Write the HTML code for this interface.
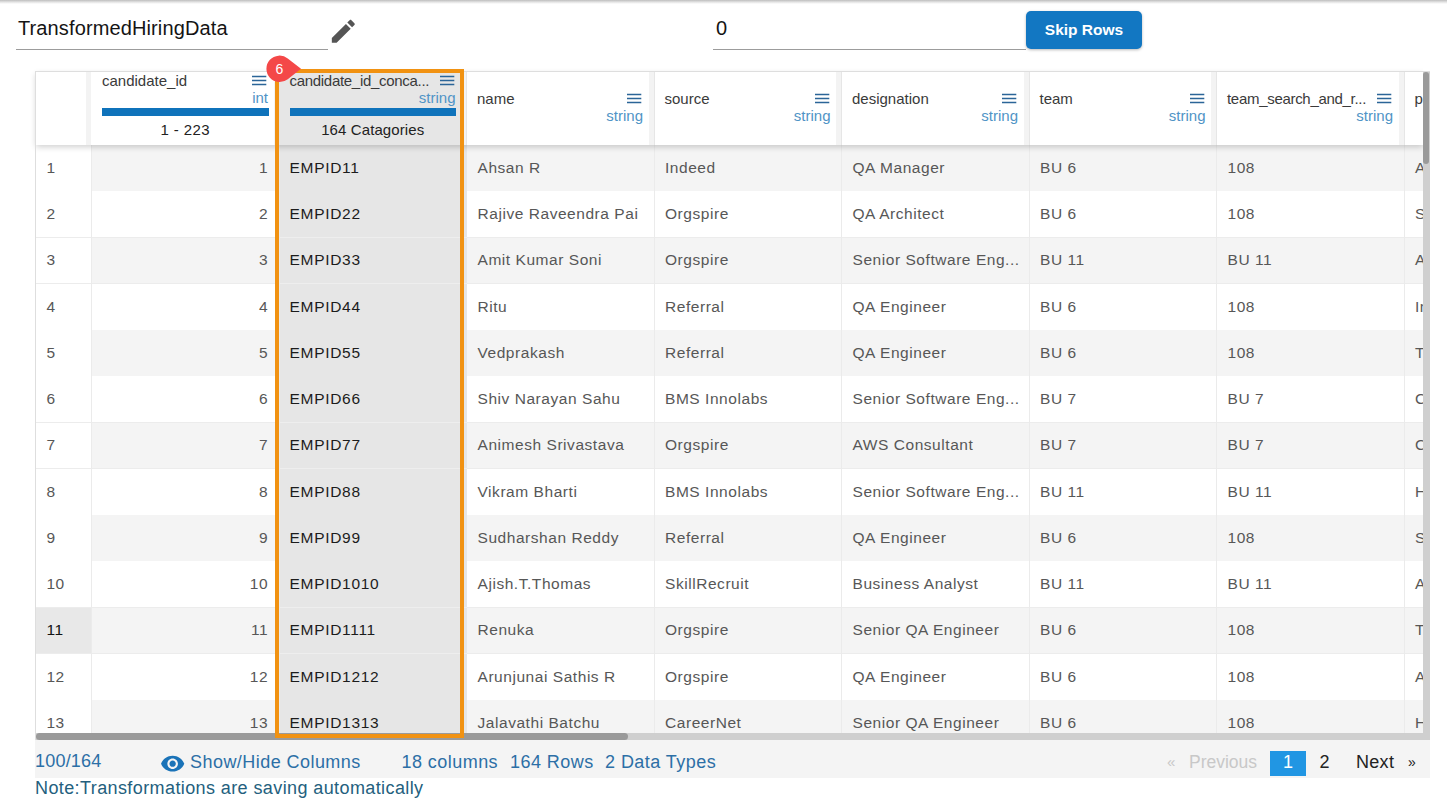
<!DOCTYPE html><html><head><meta charset="utf-8"><style>
*{margin:0;padding:0;box-sizing:border-box}
html,body{width:1447px;height:808px;overflow:hidden;background:#fff;font-family:"Liberation Sans",sans-serif}
.a{position:absolute}
.t{position:absolute;white-space:nowrap;line-height:1.149}
.ham{position:absolute;width:15px;height:10px}
.ham i{position:absolute;left:0;width:15px;height:1.3px;background:#2a6fa9}
</style></head><body><div class="a" style="left:0;top:0;width:1447px;height:4px;background:linear-gradient(#bdbdbd,#e2e2e2 50%,#fff)"></div>
<div class="t" style="left:18px;top:17.10px;font-size:20px;color:#141414;letter-spacing:0.12px;">TransformedHiringData</div>
<div class="a" style="left:16px;top:49px;width:312px;height:1px;background:#9c9c9c"></div>
<svg class="a" style="left:328px;top:15.8px" width="30.6" height="30.6" viewBox="0 0 24 24"><path fill="#555" d="M3 17.25V21h3.75L17.81 9.94l-3.75-3.75L3 17.25zM20.71 7.04c.39-.39.39-1.02 0-1.41l-2.34-2.34c-.39-.39-1.02-.39-1.41 0l-1.83 1.83 3.75 3.75 1.83-1.83z"/></svg>
<div class="t" style="left:716px;top:16.90px;font-size:20px;color:#141414;">0</div>
<div class="a" style="left:713px;top:49px;width:313px;height:1px;background:#9c9c9c"></div>
<div class="a" style="left:1026px;top:11px;width:116px;height:38px;border-radius:5px;background:#1277c2;box-shadow:0 1px 3px rgba(0,0,0,.28)"></div>
<div class="t" style="left:1026px;top:20.97px;font-size:15.5px;color:#fff;width:116px;text-align:center;font-weight:bold;">Skip Rows</div>
<div class="a" style="left:0;top:0;width:1423px;height:733px;overflow:hidden"><div class="a" style="left:92.0px;top:145.0px;width:1400px;height:46.25px;background:#f4f4f4"></div><div class="a" style="left:36px;top:145.0px;width:55px;height:46.25px;background:#fff"></div><div class="a" style="left:36px;top:190.75px;width:1400px;height:1px;background:#ececec"></div><div class="t" style="left:46.5px;top:158.77px;font-size:15.5px;color:#575757;letter-spacing:0.45px;">1</div><div class="t" style="left:92.5px;top:158.77px;font-size:15.5px;color:#575757;width:175.5px;text-align:right;letter-spacing:0.45px;">1</div><div class="a" style="left:279.5px;top:145.0px;width:187.5px;height:46.25px;background:#e6e6e6"></div><div class="a" style="left:279.5px;top:190.75px;width:187.5px;height:1px;background:#eeeeee"></div><div class="t" style="left:289.5px;top:158.77px;font-size:15.5px;color:#1c1c1c;letter-spacing:0.7px;">EMPID11</div><div class="t" style="left:477.5px;top:158.77px;font-size:15.5px;color:#575757;letter-spacing:0.55px;">Ahsan R</div><div class="t" style="left:665.0px;top:158.77px;font-size:15.5px;color:#575757;letter-spacing:0.55px;">Indeed</div><div class="t" style="left:852.5px;top:158.77px;font-size:15.5px;color:#575757;letter-spacing:0.55px;">QA Manager</div><div class="t" style="left:1040.0px;top:158.77px;font-size:15.5px;color:#575757;letter-spacing:0.55px;">BU 6</div><div class="t" style="left:1227.5px;top:158.77px;font-size:15.5px;color:#575757;letter-spacing:0.55px;">108</div><div class="t" style="left:1415.0px;top:158.77px;font-size:15.5px;color:#575757;letter-spacing:0.55px;">Ahm</div><div class="a" style="left:92.0px;top:191.25px;width:1400px;height:46.25px;background:#fff"></div><div class="a" style="left:36px;top:191.25px;width:55px;height:46.25px;background:#fff"></div><div class="a" style="left:36px;top:237.0px;width:1400px;height:1px;background:#ececec"></div><div class="t" style="left:46.5px;top:205.02px;font-size:15.5px;color:#575757;letter-spacing:0.45px;">2</div><div class="t" style="left:92.5px;top:205.02px;font-size:15.5px;color:#575757;width:175.5px;text-align:right;letter-spacing:0.45px;">2</div><div class="a" style="left:279.5px;top:191.25px;width:187.5px;height:46.25px;background:#e6e6e6"></div><div class="a" style="left:279.5px;top:237.0px;width:187.5px;height:1px;background:#eeeeee"></div><div class="t" style="left:289.5px;top:205.02px;font-size:15.5px;color:#1c1c1c;letter-spacing:0.7px;">EMPID22</div><div class="t" style="left:477.5px;top:205.02px;font-size:15.5px;color:#575757;letter-spacing:0.55px;">Rajive Raveendra Pai</div><div class="t" style="left:665.0px;top:205.02px;font-size:15.5px;color:#575757;letter-spacing:0.55px;">Orgspire</div><div class="t" style="left:852.5px;top:205.02px;font-size:15.5px;color:#575757;letter-spacing:0.55px;">QA Architect</div><div class="t" style="left:1040.0px;top:205.02px;font-size:15.5px;color:#575757;letter-spacing:0.55px;">BU 6</div><div class="t" style="left:1227.5px;top:205.02px;font-size:15.5px;color:#575757;letter-spacing:0.55px;">108</div><div class="t" style="left:1415.0px;top:205.02px;font-size:15.5px;color:#575757;letter-spacing:0.55px;">Sur</div><div class="a" style="left:92.0px;top:237.5px;width:1400px;height:46.25px;background:#f4f4f4"></div><div class="a" style="left:36px;top:237.5px;width:55px;height:46.25px;background:#fff"></div><div class="a" style="left:36px;top:283.25px;width:1400px;height:1px;background:#ececec"></div><div class="t" style="left:46.5px;top:251.27px;font-size:15.5px;color:#575757;letter-spacing:0.45px;">3</div><div class="t" style="left:92.5px;top:251.27px;font-size:15.5px;color:#575757;width:175.5px;text-align:right;letter-spacing:0.45px;">3</div><div class="a" style="left:279.5px;top:237.5px;width:187.5px;height:46.25px;background:#e6e6e6"></div><div class="a" style="left:279.5px;top:283.25px;width:187.5px;height:1px;background:#eeeeee"></div><div class="t" style="left:289.5px;top:251.27px;font-size:15.5px;color:#1c1c1c;letter-spacing:0.7px;">EMPID33</div><div class="t" style="left:477.5px;top:251.27px;font-size:15.5px;color:#575757;letter-spacing:0.55px;">Amit Kumar Soni</div><div class="t" style="left:665.0px;top:251.27px;font-size:15.5px;color:#575757;letter-spacing:0.55px;">Orgspire</div><div class="t" style="left:852.5px;top:251.27px;font-size:15.5px;color:#575757;letter-spacing:0.55px;">Senior Software Eng...</div><div class="t" style="left:1040.0px;top:251.27px;font-size:15.5px;color:#575757;letter-spacing:0.55px;">BU 11</div><div class="t" style="left:1227.5px;top:251.27px;font-size:15.5px;color:#575757;letter-spacing:0.55px;">BU 11</div><div class="t" style="left:1415.0px;top:251.27px;font-size:15.5px;color:#575757;letter-spacing:0.55px;">Ahm</div><div class="a" style="left:92.0px;top:283.75px;width:1400px;height:46.25px;background:#fff"></div><div class="a" style="left:36px;top:283.75px;width:55px;height:46.25px;background:#fff"></div><div class="a" style="left:36px;top:329.5px;width:1400px;height:1px;background:#ececec"></div><div class="t" style="left:46.5px;top:297.52px;font-size:15.5px;color:#575757;letter-spacing:0.45px;">4</div><div class="t" style="left:92.5px;top:297.52px;font-size:15.5px;color:#575757;width:175.5px;text-align:right;letter-spacing:0.45px;">4</div><div class="a" style="left:279.5px;top:283.75px;width:187.5px;height:46.25px;background:#e6e6e6"></div><div class="a" style="left:279.5px;top:329.5px;width:187.5px;height:1px;background:#eeeeee"></div><div class="t" style="left:289.5px;top:297.52px;font-size:15.5px;color:#1c1c1c;letter-spacing:0.7px;">EMPID44</div><div class="t" style="left:477.5px;top:297.52px;font-size:15.5px;color:#575757;letter-spacing:0.55px;">Ritu</div><div class="t" style="left:665.0px;top:297.52px;font-size:15.5px;color:#575757;letter-spacing:0.55px;">Referral</div><div class="t" style="left:852.5px;top:297.52px;font-size:15.5px;color:#575757;letter-spacing:0.55px;">QA Engineer</div><div class="t" style="left:1040.0px;top:297.52px;font-size:15.5px;color:#575757;letter-spacing:0.55px;">BU 6</div><div class="t" style="left:1227.5px;top:297.52px;font-size:15.5px;color:#575757;letter-spacing:0.55px;">108</div><div class="t" style="left:1415.0px;top:297.52px;font-size:15.5px;color:#575757;letter-spacing:0.55px;">Ind</div><div class="a" style="left:92.0px;top:330.0px;width:1400px;height:46.25px;background:#f4f4f4"></div><div class="a" style="left:36px;top:330.0px;width:55px;height:46.25px;background:#fff"></div><div class="a" style="left:36px;top:375.75px;width:1400px;height:1px;background:#ececec"></div><div class="t" style="left:46.5px;top:343.77px;font-size:15.5px;color:#575757;letter-spacing:0.45px;">5</div><div class="t" style="left:92.5px;top:343.77px;font-size:15.5px;color:#575757;width:175.5px;text-align:right;letter-spacing:0.45px;">5</div><div class="a" style="left:279.5px;top:330.0px;width:187.5px;height:46.25px;background:#e6e6e6"></div><div class="a" style="left:279.5px;top:375.75px;width:187.5px;height:1px;background:#eeeeee"></div><div class="t" style="left:289.5px;top:343.77px;font-size:15.5px;color:#1c1c1c;letter-spacing:0.7px;">EMPID55</div><div class="t" style="left:477.5px;top:343.77px;font-size:15.5px;color:#575757;letter-spacing:0.55px;">Vedprakash</div><div class="t" style="left:665.0px;top:343.77px;font-size:15.5px;color:#575757;letter-spacing:0.55px;">Referral</div><div class="t" style="left:852.5px;top:343.77px;font-size:15.5px;color:#575757;letter-spacing:0.55px;">QA Engineer</div><div class="t" style="left:1040.0px;top:343.77px;font-size:15.5px;color:#575757;letter-spacing:0.55px;">BU 6</div><div class="t" style="left:1227.5px;top:343.77px;font-size:15.5px;color:#575757;letter-spacing:0.55px;">108</div><div class="t" style="left:1415.0px;top:343.77px;font-size:15.5px;color:#575757;letter-spacing:0.55px;">Tha</div><div class="a" style="left:92.0px;top:376.25px;width:1400px;height:46.25px;background:#fff"></div><div class="a" style="left:36px;top:376.25px;width:55px;height:46.25px;background:#fff"></div><div class="a" style="left:36px;top:422.0px;width:1400px;height:1px;background:#ececec"></div><div class="t" style="left:46.5px;top:390.02px;font-size:15.5px;color:#575757;letter-spacing:0.45px;">6</div><div class="t" style="left:92.5px;top:390.02px;font-size:15.5px;color:#575757;width:175.5px;text-align:right;letter-spacing:0.45px;">6</div><div class="a" style="left:279.5px;top:376.25px;width:187.5px;height:46.25px;background:#e6e6e6"></div><div class="a" style="left:279.5px;top:422.0px;width:187.5px;height:1px;background:#eeeeee"></div><div class="t" style="left:289.5px;top:390.02px;font-size:15.5px;color:#1c1c1c;letter-spacing:0.7px;">EMPID66</div><div class="t" style="left:477.5px;top:390.02px;font-size:15.5px;color:#575757;letter-spacing:0.55px;">Shiv Narayan Sahu</div><div class="t" style="left:665.0px;top:390.02px;font-size:15.5px;color:#575757;letter-spacing:0.55px;">BMS Innolabs</div><div class="t" style="left:852.5px;top:390.02px;font-size:15.5px;color:#575757;letter-spacing:0.55px;">Senior Software Eng...</div><div class="t" style="left:1040.0px;top:390.02px;font-size:15.5px;color:#575757;letter-spacing:0.55px;">BU 7</div><div class="t" style="left:1227.5px;top:390.02px;font-size:15.5px;color:#575757;letter-spacing:0.55px;">BU 7</div><div class="t" style="left:1415.0px;top:390.02px;font-size:15.5px;color:#575757;letter-spacing:0.55px;">Che</div><div class="a" style="left:92.0px;top:422.5px;width:1400px;height:46.25px;background:#f4f4f4"></div><div class="a" style="left:36px;top:422.5px;width:55px;height:46.25px;background:#fff"></div><div class="a" style="left:36px;top:468.25px;width:1400px;height:1px;background:#ececec"></div><div class="t" style="left:46.5px;top:436.27px;font-size:15.5px;color:#575757;letter-spacing:0.45px;">7</div><div class="t" style="left:92.5px;top:436.27px;font-size:15.5px;color:#575757;width:175.5px;text-align:right;letter-spacing:0.45px;">7</div><div class="a" style="left:279.5px;top:422.5px;width:187.5px;height:46.25px;background:#e6e6e6"></div><div class="a" style="left:279.5px;top:468.25px;width:187.5px;height:1px;background:#eeeeee"></div><div class="t" style="left:289.5px;top:436.27px;font-size:15.5px;color:#1c1c1c;letter-spacing:0.7px;">EMPID77</div><div class="t" style="left:477.5px;top:436.27px;font-size:15.5px;color:#575757;letter-spacing:0.55px;">Animesh Srivastava</div><div class="t" style="left:665.0px;top:436.27px;font-size:15.5px;color:#575757;letter-spacing:0.55px;">Orgspire</div><div class="t" style="left:852.5px;top:436.27px;font-size:15.5px;color:#575757;letter-spacing:0.55px;">AWS Consultant</div><div class="t" style="left:1040.0px;top:436.27px;font-size:15.5px;color:#575757;letter-spacing:0.55px;">BU 7</div><div class="t" style="left:1227.5px;top:436.27px;font-size:15.5px;color:#575757;letter-spacing:0.55px;">BU 7</div><div class="t" style="left:1415.0px;top:436.27px;font-size:15.5px;color:#575757;letter-spacing:0.55px;">Che</div><div class="a" style="left:92.0px;top:468.75px;width:1400px;height:46.25px;background:#fff"></div><div class="a" style="left:36px;top:468.75px;width:55px;height:46.25px;background:#fff"></div><div class="a" style="left:36px;top:514.5px;width:1400px;height:1px;background:#ececec"></div><div class="t" style="left:46.5px;top:482.52px;font-size:15.5px;color:#575757;letter-spacing:0.45px;">8</div><div class="t" style="left:92.5px;top:482.52px;font-size:15.5px;color:#575757;width:175.5px;text-align:right;letter-spacing:0.45px;">8</div><div class="a" style="left:279.5px;top:468.75px;width:187.5px;height:46.25px;background:#e6e6e6"></div><div class="a" style="left:279.5px;top:514.5px;width:187.5px;height:1px;background:#eeeeee"></div><div class="t" style="left:289.5px;top:482.52px;font-size:15.5px;color:#1c1c1c;letter-spacing:0.7px;">EMPID88</div><div class="t" style="left:477.5px;top:482.52px;font-size:15.5px;color:#575757;letter-spacing:0.55px;">Vikram Bharti</div><div class="t" style="left:665.0px;top:482.52px;font-size:15.5px;color:#575757;letter-spacing:0.55px;">BMS Innolabs</div><div class="t" style="left:852.5px;top:482.52px;font-size:15.5px;color:#575757;letter-spacing:0.55px;">Senior Software Eng...</div><div class="t" style="left:1040.0px;top:482.52px;font-size:15.5px;color:#575757;letter-spacing:0.55px;">BU 11</div><div class="t" style="left:1227.5px;top:482.52px;font-size:15.5px;color:#575757;letter-spacing:0.55px;">BU 11</div><div class="t" style="left:1415.0px;top:482.52px;font-size:15.5px;color:#575757;letter-spacing:0.55px;">Hyd</div><div class="a" style="left:92.0px;top:515.0px;width:1400px;height:46.25px;background:#f4f4f4"></div><div class="a" style="left:36px;top:515.0px;width:55px;height:46.25px;background:#fff"></div><div class="a" style="left:36px;top:560.75px;width:1400px;height:1px;background:#ececec"></div><div class="t" style="left:46.5px;top:528.77px;font-size:15.5px;color:#575757;letter-spacing:0.45px;">9</div><div class="t" style="left:92.5px;top:528.77px;font-size:15.5px;color:#575757;width:175.5px;text-align:right;letter-spacing:0.45px;">9</div><div class="a" style="left:279.5px;top:515.0px;width:187.5px;height:46.25px;background:#e6e6e6"></div><div class="a" style="left:279.5px;top:560.75px;width:187.5px;height:1px;background:#eeeeee"></div><div class="t" style="left:289.5px;top:528.77px;font-size:15.5px;color:#1c1c1c;letter-spacing:0.7px;">EMPID99</div><div class="t" style="left:477.5px;top:528.77px;font-size:15.5px;color:#575757;letter-spacing:0.55px;">Sudharshan Reddy</div><div class="t" style="left:665.0px;top:528.77px;font-size:15.5px;color:#575757;letter-spacing:0.55px;">Referral</div><div class="t" style="left:852.5px;top:528.77px;font-size:15.5px;color:#575757;letter-spacing:0.55px;">QA Engineer</div><div class="t" style="left:1040.0px;top:528.77px;font-size:15.5px;color:#575757;letter-spacing:0.55px;">BU 6</div><div class="t" style="left:1227.5px;top:528.77px;font-size:15.5px;color:#575757;letter-spacing:0.55px;">108</div><div class="t" style="left:1415.0px;top:528.77px;font-size:15.5px;color:#575757;letter-spacing:0.55px;">Sur</div><div class="a" style="left:92.0px;top:561.25px;width:1400px;height:46.25px;background:#fff"></div><div class="a" style="left:36px;top:561.25px;width:55px;height:46.25px;background:#fff"></div><div class="a" style="left:36px;top:607.0px;width:1400px;height:1px;background:#ececec"></div><div class="t" style="left:46.5px;top:575.02px;font-size:15.5px;color:#575757;letter-spacing:0.45px;">10</div><div class="t" style="left:92.5px;top:575.02px;font-size:15.5px;color:#575757;width:175.5px;text-align:right;letter-spacing:0.45px;">10</div><div class="a" style="left:279.5px;top:561.25px;width:187.5px;height:46.25px;background:#e6e6e6"></div><div class="a" style="left:279.5px;top:607.0px;width:187.5px;height:1px;background:#eeeeee"></div><div class="t" style="left:289.5px;top:575.02px;font-size:15.5px;color:#1c1c1c;letter-spacing:0.7px;">EMPID1010</div><div class="t" style="left:477.5px;top:575.02px;font-size:15.5px;color:#575757;letter-spacing:0.55px;">Ajish.T.Thomas</div><div class="t" style="left:665.0px;top:575.02px;font-size:15.5px;color:#575757;letter-spacing:0.55px;">SkillRecruit</div><div class="t" style="left:852.5px;top:575.02px;font-size:15.5px;color:#575757;letter-spacing:0.55px;">Business Analyst</div><div class="t" style="left:1040.0px;top:575.02px;font-size:15.5px;color:#575757;letter-spacing:0.55px;">BU 11</div><div class="t" style="left:1227.5px;top:575.02px;font-size:15.5px;color:#575757;letter-spacing:0.55px;">BU 11</div><div class="t" style="left:1415.0px;top:575.02px;font-size:15.5px;color:#575757;letter-spacing:0.55px;">Ahm</div><div class="a" style="left:92.0px;top:607.5px;width:1400px;height:46.25px;background:#f4f4f4"></div><div class="a" style="left:36px;top:607.5px;width:55px;height:46.25px;background:#e8e8e8"></div><div class="a" style="left:36px;top:653.25px;width:1400px;height:1px;background:#ececec"></div><div class="t" style="left:46.5px;top:621.27px;font-size:15.5px;color:#111;letter-spacing:0.45px;">11</div><div class="t" style="left:92.5px;top:621.27px;font-size:15.5px;color:#575757;width:175.5px;text-align:right;letter-spacing:0.45px;">11</div><div class="a" style="left:279.5px;top:607.5px;width:187.5px;height:46.25px;background:#e6e6e6"></div><div class="a" style="left:279.5px;top:653.25px;width:187.5px;height:1px;background:#eeeeee"></div><div class="t" style="left:289.5px;top:621.27px;font-size:15.5px;color:#1c1c1c;letter-spacing:0.7px;">EMPID1111</div><div class="t" style="left:477.5px;top:621.27px;font-size:15.5px;color:#575757;letter-spacing:0.55px;">Renuka</div><div class="t" style="left:665.0px;top:621.27px;font-size:15.5px;color:#575757;letter-spacing:0.55px;">Orgspire</div><div class="t" style="left:852.5px;top:621.27px;font-size:15.5px;color:#575757;letter-spacing:0.55px;">Senior QA Engineer</div><div class="t" style="left:1040.0px;top:621.27px;font-size:15.5px;color:#575757;letter-spacing:0.55px;">BU 6</div><div class="t" style="left:1227.5px;top:621.27px;font-size:15.5px;color:#575757;letter-spacing:0.55px;">108</div><div class="t" style="left:1415.0px;top:621.27px;font-size:15.5px;color:#575757;letter-spacing:0.55px;">Tha</div><div class="a" style="left:92.0px;top:653.75px;width:1400px;height:46.25px;background:#fff"></div><div class="a" style="left:36px;top:653.75px;width:55px;height:46.25px;background:#fff"></div><div class="a" style="left:36px;top:699.5px;width:1400px;height:1px;background:#ececec"></div><div class="t" style="left:46.5px;top:667.52px;font-size:15.5px;color:#575757;letter-spacing:0.45px;">12</div><div class="t" style="left:92.5px;top:667.52px;font-size:15.5px;color:#575757;width:175.5px;text-align:right;letter-spacing:0.45px;">12</div><div class="a" style="left:279.5px;top:653.75px;width:187.5px;height:46.25px;background:#e6e6e6"></div><div class="a" style="left:279.5px;top:699.5px;width:187.5px;height:1px;background:#eeeeee"></div><div class="t" style="left:289.5px;top:667.52px;font-size:15.5px;color:#1c1c1c;letter-spacing:0.7px;">EMPID1212</div><div class="t" style="left:477.5px;top:667.52px;font-size:15.5px;color:#575757;letter-spacing:0.55px;">Arunjunai Sathis R</div><div class="t" style="left:665.0px;top:667.52px;font-size:15.5px;color:#575757;letter-spacing:0.55px;">Orgspire</div><div class="t" style="left:852.5px;top:667.52px;font-size:15.5px;color:#575757;letter-spacing:0.55px;">QA Engineer</div><div class="t" style="left:1040.0px;top:667.52px;font-size:15.5px;color:#575757;letter-spacing:0.55px;">BU 6</div><div class="t" style="left:1227.5px;top:667.52px;font-size:15.5px;color:#575757;letter-spacing:0.55px;">108</div><div class="t" style="left:1415.0px;top:667.52px;font-size:15.5px;color:#575757;letter-spacing:0.55px;">Ahm</div><div class="a" style="left:92.0px;top:700.0px;width:1400px;height:46.25px;background:#f4f4f4"></div><div class="a" style="left:36px;top:700.0px;width:55px;height:46.25px;background:#fff"></div><div class="a" style="left:36px;top:745.75px;width:1400px;height:1px;background:#ececec"></div><div class="t" style="left:46.5px;top:713.77px;font-size:15.5px;color:#575757;letter-spacing:0.45px;">13</div><div class="t" style="left:92.5px;top:713.77px;font-size:15.5px;color:#575757;width:175.5px;text-align:right;letter-spacing:0.45px;">13</div><div class="a" style="left:279.5px;top:700.0px;width:187.5px;height:46.25px;background:#e6e6e6"></div><div class="a" style="left:279.5px;top:745.75px;width:187.5px;height:1px;background:#eeeeee"></div><div class="t" style="left:289.5px;top:713.77px;font-size:15.5px;color:#1c1c1c;letter-spacing:0.7px;">EMPID1313</div><div class="t" style="left:477.5px;top:713.77px;font-size:15.5px;color:#575757;letter-spacing:0.55px;">Jalavathi Batchu</div><div class="t" style="left:665.0px;top:713.77px;font-size:15.5px;color:#575757;letter-spacing:0.55px;">CareerNet</div><div class="t" style="left:852.5px;top:713.77px;font-size:15.5px;color:#575757;letter-spacing:0.55px;">Senior QA Engineer</div><div class="t" style="left:1040.0px;top:713.77px;font-size:15.5px;color:#575757;letter-spacing:0.55px;">BU 6</div><div class="t" style="left:1227.5px;top:713.77px;font-size:15.5px;color:#575757;letter-spacing:0.55px;">108</div><div class="t" style="left:1415.0px;top:713.77px;font-size:15.5px;color:#575757;letter-spacing:0.55px;">Hyd</div><div class="a" style="left:91.0px;top:145px;width:1px;height:600px;background:#ebebeb"></div><div class="a" style="left:278.5px;top:145px;width:1px;height:600px;background:#ebebeb"></div><div class="a" style="left:653.5px;top:145px;width:1px;height:600px;background:#ebebeb"></div><div class="a" style="left:841.0px;top:145px;width:1px;height:600px;background:#ebebeb"></div><div class="a" style="left:1028.5px;top:145px;width:1px;height:600px;background:#ebebeb"></div><div class="a" style="left:1216.0px;top:145px;width:1px;height:600px;background:#ebebeb"></div><div class="a" style="left:1403.5px;top:145px;width:1px;height:600px;background:#ebebeb"></div></div>
<div class="a" style="left:0;top:0;width:1423px;height:733px;overflow:hidden"><div class="a" style="left:36px;top:72px;width:1387px;height:73px;background:#fff;box-shadow:0 2px 6px rgba(0,0,0,.19)"></div><div class="a" style="left:86px;top:72px;width:5px;height:73px;background:#f3f3f3"></div><div class="a" style="left:273.5px;top:72px;width:5px;height:73px;background:#f3f3f3"></div><div class="a" style="left:278.5px;top:72px;width:1px;height:73px;background:#e6e6e6"></div><div class="t" style="left:102.0px;top:72.02px;font-size:15px;color:#3a3a3a;letter-spacing:0px;">candidate_id</div><div class="t" style="left:91.5px;top:89.02px;font-size:15px;color:#5094c6;width:176.5px;text-align:right;">int</div><svg class="a" style="left:252.0px;top:75px" width="16" height="12" viewBox="0 0 16 12"><path stroke="#2b6598" stroke-width="1.3" d="M0 1.5H14.3M0 5.5H14.3M0 9.5H14.3"/></svg><div class="a" style="left:102.0px;top:108px;width:166.5px;height:7.5px;background:#0f73bb"></div><div class="t" style="left:91.5px;top:121.42px;font-size:15px;color:#222;width:187.5px;text-align:center;letter-spacing:0.4px;">1 - 223</div><div class="a" style="left:279.5px;top:72px;width:187.5px;height:73px;background:#e6e6e6"></div><div class="a" style="left:461.0px;top:72px;width:5px;height:73px;background:#f3f3f3"></div><div class="a" style="left:466.0px;top:72px;width:1px;height:73px;background:#e6e6e6"></div><div class="t" style="left:289.5px;top:72.02px;font-size:15px;color:#3a3a3a;letter-spacing:-0.3px;">candidate_id_conca...</div><div class="t" style="left:279.0px;top:89.02px;font-size:15px;color:#5094c6;width:176.5px;text-align:right;">string</div><svg class="a" style="left:439.5px;top:75px" width="16" height="12" viewBox="0 0 16 12"><path stroke="#2b6598" stroke-width="1.3" d="M0 1.5H14.3M0 5.5H14.3M0 9.5H14.3"/></svg><div class="a" style="left:289.5px;top:108px;width:166.5px;height:7.5px;background:#0f73bb"></div><div class="t" style="left:279.0px;top:121.42px;font-size:15px;color:#222;width:187.5px;text-align:center;letter-spacing:0.1px;">164 Catagories</div><div class="a" style="left:648.5px;top:72px;width:5px;height:73px;background:#f3f3f3"></div><div class="a" style="left:653.5px;top:72px;width:1px;height:73px;background:#e6e6e6"></div><div class="t" style="left:477.0px;top:90.02px;font-size:15px;color:#3a3a3a;letter-spacing:0px;">name</div><div class="t" style="left:466.5px;top:107.02px;font-size:15px;color:#5094c6;width:176.5px;text-align:right;">string</div><svg class="a" style="left:627.0px;top:93px" width="16" height="12" viewBox="0 0 16 12"><path stroke="#2b6598" stroke-width="1.3" d="M0 1.5H14.3M0 5.5H14.3M0 9.5H14.3"/></svg><div class="a" style="left:836.0px;top:72px;width:5px;height:73px;background:#f3f3f3"></div><div class="a" style="left:841.0px;top:72px;width:1px;height:73px;background:#e6e6e6"></div><div class="t" style="left:664.5px;top:90.02px;font-size:15px;color:#3a3a3a;letter-spacing:0px;">source</div><div class="t" style="left:654.0px;top:107.02px;font-size:15px;color:#5094c6;width:176.5px;text-align:right;">string</div><svg class="a" style="left:814.5px;top:93px" width="16" height="12" viewBox="0 0 16 12"><path stroke="#2b6598" stroke-width="1.3" d="M0 1.5H14.3M0 5.5H14.3M0 9.5H14.3"/></svg><div class="a" style="left:1023.5px;top:72px;width:5px;height:73px;background:#f3f3f3"></div><div class="a" style="left:1028.5px;top:72px;width:1px;height:73px;background:#e6e6e6"></div><div class="t" style="left:852.0px;top:90.02px;font-size:15px;color:#3a3a3a;letter-spacing:0px;">designation</div><div class="t" style="left:841.5px;top:107.02px;font-size:15px;color:#5094c6;width:176.5px;text-align:right;">string</div><svg class="a" style="left:1002.0px;top:93px" width="16" height="12" viewBox="0 0 16 12"><path stroke="#2b6598" stroke-width="1.3" d="M0 1.5H14.3M0 5.5H14.3M0 9.5H14.3"/></svg><div class="a" style="left:1211.0px;top:72px;width:5px;height:73px;background:#f3f3f3"></div><div class="a" style="left:1216.0px;top:72px;width:1px;height:73px;background:#e6e6e6"></div><div class="t" style="left:1039.5px;top:90.02px;font-size:15px;color:#3a3a3a;letter-spacing:0px;">team</div><div class="t" style="left:1029.0px;top:107.02px;font-size:15px;color:#5094c6;width:176.5px;text-align:right;">string</div><svg class="a" style="left:1189.5px;top:93px" width="16" height="12" viewBox="0 0 16 12"><path stroke="#2b6598" stroke-width="1.3" d="M0 1.5H14.3M0 5.5H14.3M0 9.5H14.3"/></svg><div class="a" style="left:1398.5px;top:72px;width:5px;height:73px;background:#f3f3f3"></div><div class="a" style="left:1403.5px;top:72px;width:1px;height:73px;background:#e6e6e6"></div><div class="t" style="left:1227.0px;top:90.02px;font-size:15px;color:#3a3a3a;letter-spacing:-0.3px;">team_search_and_r...</div><div class="t" style="left:1216.5px;top:107.02px;font-size:15px;color:#5094c6;width:176.5px;text-align:right;">string</div><svg class="a" style="left:1377.0px;top:93px" width="16" height="12" viewBox="0 0 16 12"><path stroke="#2b6598" stroke-width="1.3" d="M0 1.5H14.3M0 5.5H14.3M0 9.5H14.3"/></svg><div class="a" style="left:1586.0px;top:72px;width:5px;height:73px;background:#f3f3f3"></div><div class="a" style="left:1591.0px;top:72px;width:1px;height:73px;background:#e6e6e6"></div><div class="t" style="left:1414.5px;top:90.02px;font-size:15px;color:#3a3a3a;letter-spacing:0px;">p</div></div>
<div class="a" style="left:35px;top:71px;width:1395px;height:1px;background:#dedede"></div>
<div class="a" style="left:35px;top:71px;width:1px;height:669px;background:#dedede"></div>
<div class="a" style="left:1423px;top:72px;width:7px;height:668px;background:#cfcfcf"></div>
<div class="a" style="left:1422.5px;top:72px;width:6.5px;height:92px;background:#9a9a9a;border-radius:3.5px"></div>
<div class="a" style="left:36px;top:733px;width:1394px;height:7px;background:#cfcfcf"></div>
<div class="a" style="left:36px;top:733px;width:592px;height:7px;background:#9a9a9a;border-radius:3.5px"></div>
<div class="a" style="left:275px;top:69px;width:189px;height:669px;border:4px solid #f19212"></div>
<svg class="a" style="left:260px;top:50px" width="50" height="40" viewBox="0 0 50 40"><path fill="#f44848" d="M41 18.8L27.74 8.4A13.2 13.2 0 1 0 27.74 29.2Z"/></svg>
<div class="t" style="left:266px;top:61.13px;font-size:14px;color:#fff;width:27px;text-align:center;">6</div>
<div class="a" style="left:35px;top:740px;width:1395px;height:38px;background:#f4f4f4"></div>
<div class="t" style="left:35px;top:750.61px;font-size:18px;color:#2c6fa6;letter-spacing:0.2px;">100/164</div>
<svg class="a" style="left:160px;top:751px" width="25.3" height="25.3" viewBox="0 0 24 24"><path fill="#1a73b8" d="M12 4.5C7 4.5 2.73 7.61 1 12c1.73 4.39 6 7.5 11 7.5s9.27-3.11 11-7.5c-1.73-4.39-6-7.5-11-7.5zM12 17c-2.76 0-5-2.24-5-5s2.24-5 5-5 5 2.24 5 5-2.24 5-5 5zm0-8c-1.66 0-3 1.34-3 3s1.34 3 3 3 3-1.34 3-3-1.34-3-3-3z"/></svg>
<div class="t" style="left:190px;top:752.41px;font-size:18px;color:#2c6fa6;letter-spacing:0.45px;">Show/Hide Columns</div>
<div class="t" style="left:401.5px;top:752.41px;font-size:18px;color:#2c6fa6;letter-spacing:0.45px;">18 columns</div>
<div class="t" style="left:510px;top:752.41px;font-size:18px;color:#2c6fa6;letter-spacing:0.45px;">164 Rows</div>
<div class="t" style="left:605px;top:752.41px;font-size:18px;color:#2c6fa6;letter-spacing:0.45px;">2 Data Types</div>
<div class="t" style="left:1167px;top:753.42px;font-size:15px;color:#c8c8c8;">&laquo;</div>
<div class="t" style="left:1189px;top:752.16px;font-size:17.5px;color:#c8c8c8;letter-spacing:0px;">Previous</div>
<div class="a" style="left:1270px;top:751px;width:36px;height:25px;background:#2196e3"></div>
<div class="t" style="left:1270px;top:751.71px;font-size:18px;color:#fff;width:36px;text-align:center;">1</div>
<div class="t" style="left:1319.5px;top:751.71px;font-size:18px;color:#222;">2</div>
<div class="t" style="left:1356px;top:751.71px;font-size:18px;color:#222;letter-spacing:0.3px;">Next</div>
<div class="t" style="left:1408px;top:754.33px;font-size:14px;color:#222;">&raquo;</div>
<div class="t" style="left:35px;top:778.11px;font-size:18px;color:#245f7e;letter-spacing:0.4px;">Note:Transformations are saving automatically</div></body></html>
